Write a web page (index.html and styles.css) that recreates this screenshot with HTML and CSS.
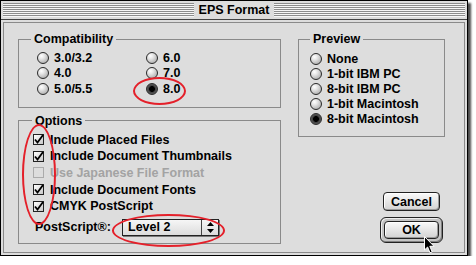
FILE: index.html
```html
<!DOCTYPE html>
<html lang="en">
<head>
    <meta charset='utf-8'>
    <title>EPS Format</title>
    <link rel="stylesheet" href="styles.css">
</head>
<body>

<div class="window">
    <div class="titlebar">
        <span class="grip"></span>
        <span class="title">EPS Format</span>
        <span class="grip"></span>
    </div>
    <div class="frame">
        <div class="content">
            <div class="left">
                <fieldset class="group compat">
                    <legend>Compatibility</legend>
                    <div class="compat-grid">
                        <div class="radio"><span class="dot"></span>3.0/3.2</div>
                        <div class="radio"><span class="dot"></span>4.0</div>
                        <div class="radio"><span class="dot"></span>5.0/5.5</div>
                        <div class="radio"><span class="dot"></span>6.0</div>
                        <div class="radio"><span class="dot"></span>7.0</div>
                        <div class="radio on"><span class="dot"></span>8.0</div>
                    </div>
                </fieldset>

                <fieldset class="group options">
                    <legend>Options</legend>
                    <div class="options-list">
                        <div class="check on"><span class="box"><svg width="11" height="11" viewBox="0 0 11 11"><path d="M2 5.5 L4.5 8.5 L10 1" fill="none" stroke="#000" stroke-width="1.8"/></svg></span>Include Placed Files</div>
                        <div class="check on"><span class="box"><svg width="11" height="11" viewBox="0 0 11 11"><path d="M2 5.5 L4.5 8.5 L10 1" fill="none" stroke="#000" stroke-width="1.8"/></svg></span>Include Document Thumbnails</div>
                        <div class="check disabled"><span class="box"></span>Use Japanese File Format</div>
                        <div class="check on"><span class="box"><svg width="11" height="11" viewBox="0 0 11 11"><path d="M2 5.5 L4.5 8.5 L10 1" fill="none" stroke="#000" stroke-width="1.8"/></svg></span>Include Document Fonts</div>
                        <div class="check on"><span class="box"><svg width="11" height="11" viewBox="0 0 11 11"><path d="M2 5.5 L4.5 8.5 L10 1" fill="none" stroke="#000" stroke-width="1.8"/></svg></span>CMYK PostScript</div>
                        <div class="ps-row">
                            <span class="ps-label">PostScript®:</span>
                            <div class="popup">
                                <span class="value">Level 2</span>
                                <span class="arrows"><svg width="7" height="11" viewBox="0 0 7 11"><path d="M3.5 0 L7 4 L0 4 Z M0 7 L7 7 L3.5 11 Z" fill="#000"/></svg></span>
                            </div>
                        </div>
                    </div>
                </fieldset>
            </div>

            <div class="right">
                <fieldset class="group preview">
                    <legend>Preview</legend>
                    <div class="preview-list">
                        <div class="radio"><span class="dot"></span>None</div>
                        <div class="radio"><span class="dot"></span>1-bit IBM PC</div>
                        <div class="radio"><span class="dot"></span>8-bit IBM PC</div>
                        <div class="radio"><span class="dot"></span>1-bit Macintosh</div>
                        <div class="radio on"><span class="dot"></span>8-bit Macintosh</div>
                    </div>
                </fieldset>
                <div class="buttons">
                    <button class="btn">Cancel</button>
                    <div class="ring"><button class="btn ok">OK</button></div>
                </div>
            </div>
        </div>
    </div>

    <!-- red annotation marks -->
    <span class="mark mark-version"></span>
    <span class="mark mark-checks"></span>
    <span class="mark mark-level"></span>

    <svg class="cursor" width="12" height="18" viewBox="0 0 12 18">
        <path d="M0.5 0.5 L0.5 14 L3.6 11 L6 16.8 L8.2 15.9 L5.8 10.3 L10 10.3 Z" fill="#000" stroke="#fff" stroke-width="1"/>
    </svg>
</div>

</body>
</html>
```

FILE: styles.css
```css
body {
    margin: 0;
    background: #ffffff;
    font: 700 12.5px "Liberation Sans", Arial, sans-serif;
    color: #000000;
}

.window {
    position: relative;
    width: 468px;
    height: 256px;
    box-sizing: border-box;
    border: 1px solid #000000;
    background: #dddddd;
    box-shadow: 3px 3px 2px rgba(0, 0, 0, 0.7);
}

.titlebar {
    display: flex;
    align-items: center;
    height: 18px;
    padding: 0 2px;
    border-bottom: 1px solid #444444;
}

.grip {
    flex: 1;
    height: 14px;
    background: repeating-linear-gradient(#8c8c8c 0 1px, #f6f6f6 1px 2px);
}

.title {
    padding: 0 5px;
    line-height: 14px;
}

.frame {
    padding: 2px;
}

.content {
    display: flex;
    gap: 17px;
    height: 231px;
    box-sizing: border-box;
    border: 1px solid #8a8a8a;
    padding: 9px 0 0 14px;
}

.group {
    margin: 0;
    padding: 0;
    border: 1px solid #8a8a8a;
    box-sizing: border-box;
    min-width: 0;
}

.group legend {
    margin-left: 12px;
    padding: 0 3px;
    line-height: 14px;
}

.compat {
    width: 263px;
}

.compat-grid {
    display: grid;
    grid-template-columns: 109px auto;
    grid-template-rows: repeat(3, 15.5px);
    grid-auto-flow: column;
    padding: 4px 0 10px 18px;
}

.options {
    width: 263px;
    margin-top: 6px;
}

.options legend {
    margin-left: 13px;
}

.options-list {
    padding: 4px 0 7px 14px;
}

.radio {
    display: flex;
    align-items: center;
    gap: 5px;
    height: 15.5px;
    white-space: nowrap;
}

.dot {
    width: 12px;
    height: 12px;
    box-sizing: border-box;
    border: 1px solid #2a2a2a;
    border-radius: 50%;
    background: radial-gradient(circle at 35% 30%, #ffffff 0, #e6e6e6 30%, #9a9a9a 100%);
}

.radio.on .dot {
    background: radial-gradient(circle, #000000 0 2.6px, #3c3c3c 3.2px, #808080 100%);
}

.check {
    display: flex;
    align-items: center;
    gap: 6px;
    height: 16.6px;
    white-space: nowrap;
}

.box {
    width: 11px;
    height: 11px;
    box-sizing: border-box;
    border: 1px solid #222222;
    background: linear-gradient(135deg, #ffffff, #c8c8c8);
    position: relative;
}

.box svg {
    position: absolute;
    left: -1px;
    top: -1px;
}

.check.disabled {
    color: #a3a3a3;
}

.check.disabled .box {
    border-color: #ababab;
    background: #dddddd;
}

.ps-row {
    display: flex;
    align-items: center;
    height: 18px;
    margin-top: 4px;
    padding-left: 2px;
}

.ps-label {
    width: 87px;
}

.popup {
    display: flex;
    width: 97px;
    height: 17px;
    box-sizing: border-box;
    border: 1px solid #222222;
    background: linear-gradient(#f6f6f6, #dcdcdc);
    box-shadow: 1px 1px 0 #7a7a7a;
}

.popup .value {
    flex: 1;
    padding-left: 5px;
    line-height: 15px;
}

.popup .arrows {
    width: 16px;
    display: grid;
    place-items: center;
    border-left: 1px solid #444444;
}

.right {
    display: flex;
    flex-direction: column;
    width: 147px;
}

.preview {
    width: 147px;
}

.preview legend {
    margin-left: 11px;
}

.preview-list {
    padding: 5.5px 0 9.5px 11px;
}

.preview-list .radio {
    height: 15px;
}

.buttons {
    margin-top: 55px;
    margin-right: 2px;
    align-self: flex-end;
    display: flex;
    flex-direction: column;
    align-items: center;
    gap: 6px;
}

.btn {
    width: 57px;
    height: 19px;
    padding: 0;
    border: 1px solid #222222;
    border-radius: 4px;
    background: linear-gradient(#fafafa, #d2d2d2);
    box-shadow: inset 1px 1px 0 #ffffff, inset -1px -1px 0 #9a9a9a;
    font: inherit;
    color: #000000;
}

.ring {
    padding: 3px;
    border: 1px solid #222222;
    border-radius: 6px;
    background: #c4c4c4;
    box-shadow: inset 1px 1px 0 #eeeeee, inset -1px -1px 0 #808080;
}

.btn.ok {
    display: block;
    width: 55px;
    height: 18px;
}

.mark {
    position: absolute;
    border: 2.5px solid #e4202a;
    border-radius: 50%;
    box-sizing: border-box;
}

.mark-version {
    left: 132px;
    top: 76px;
    width: 53px;
    height: 28px;
}

.mark-checks {
    left: 21px;
    top: 123px;
    width: 34px;
    height: 101px;
}

.mark-level {
    left: 111px;
    top: 213px;
    width: 113px;
    height: 33px;
}

.cursor {
    position: absolute;
    left: 423px;
    top: 235px;
}
```
